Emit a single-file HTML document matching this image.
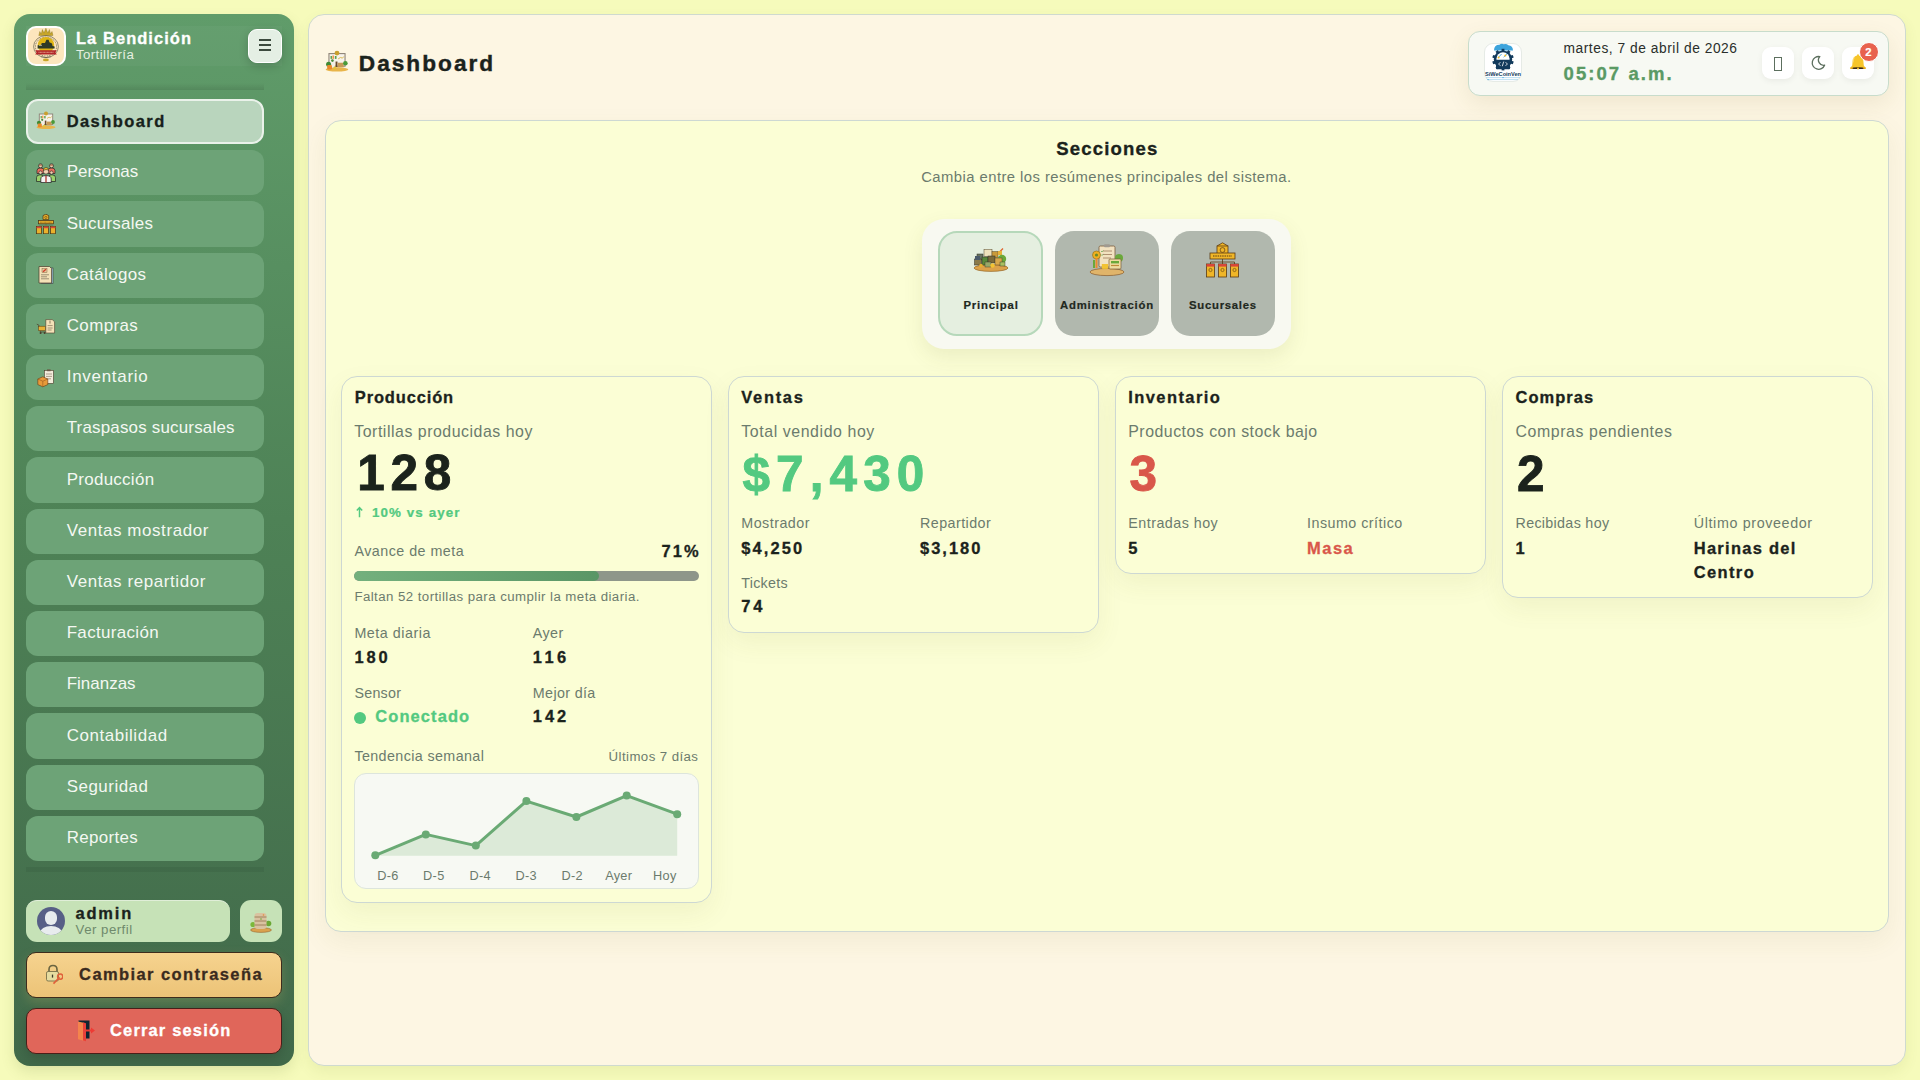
<!DOCTYPE html>
<html><head><meta charset="utf-8"><title>Dashboard</title>
<style>
*{box-sizing:border-box;margin:0;padding:0}
html,body{width:1920px;height:1080px;overflow:hidden}
body{background:#f6fbbb;font-family:"Liberation Sans",sans-serif;position:relative}
.t{position:absolute;white-space:nowrap}
.a{position:absolute}

.sb{left:14px;top:14px;width:280px;height:1052px;border-radius:16px;background:linear-gradient(180deg,#609c6a 0%,#4e8256 48%,#41694a 100%);box-shadow:0 6px 14px rgba(70,90,20,.13)}
.nav{position:absolute;left:26px;width:238px;height:45.2px;border-radius:12px;background:#6da377}
.nav.act{background:#b9d5bd;border:2px solid #eaf2ea}
.main{left:308px;top:14px;width:1598px;height:1052px;border-radius:16px;background:#fdf6e3;border:1px solid #cfdacf;box-shadow:0 6px 14px rgba(90,100,20,.08)}
.card{position:absolute;background:#fbfed5;border:1px solid #cdd8d3;border-radius:16px;box-shadow:0 10px 26px rgba(120,110,40,.08)}

</style></head><body>
<div class="a sb"></div>
<div class="a" style="left:26px;top:26px;width:256px;height:40px;background:rgba(255,255,255,.035)"></div>
<div class="a" style="left:26px;top:26px;width:40px;height:40px;border-radius:10px;background:#fde6bd;border:2px solid #fff"></div>
<div class="t" style="left:76.00px;top:27.59px;font-size:16.48px;line-height:21px;font-weight:700;color:#ffffff;letter-spacing:1.057px;-webkit-text-stroke:0.30px currentColor;">La Bendición</div>
<div class="t" style="left:76.00px;top:45.91px;font-size:13.25px;line-height:17px;font-weight:400;color:#e6f0e2;letter-spacing:0.400px;">Tortillería</div>
<div class="a" style="left:248px;top:29px;width:34px;height:34px;border-radius:9px;background:#e4efe4;border:1.5px solid #fff;box-shadow:0 3px 10px rgba(0,0,0,.18)"></div>
<div class="a" style="left:259px;top:39px;width:12px;height:2px;background:#3c4a3e"></div>
<div class="a" style="left:259px;top:44px;width:12px;height:2px;background:#3c4a3e"></div>
<div class="a" style="left:259px;top:49px;width:12px;height:2px;background:#3c4a3e"></div>
<div class="a" style="left:26px;top:83px;width:238px;height:7px;background:linear-gradient(180deg,rgba(0,0,0,0),rgba(0,0,0,.10))"></div>
<div class="a" style="left:26px;top:866.5px;width:238px;height:5px;background:rgba(0,0,0,.06)"></div>
<div class="nav act" style="top:99.0px"></div>
<div class="t" style="left:66.70px;top:110.89px;font-size:16.48px;line-height:21px;font-weight:700;color:#17211a;letter-spacing:1.438px;-webkit-text-stroke:0.30px currentColor;">Dashboard</div>
<div class="nav" style="top:150.2px"></div>
<div class="t" style="left:66.70px;top:161.32px;font-size:16.96px;line-height:22px;font-weight:400;color:#f4f8f2;letter-spacing:0.000px;">Personas</div>
<div class="nav" style="top:201.4px"></div>
<div class="t" style="left:66.70px;top:212.52px;font-size:16.96px;line-height:22px;font-weight:400;color:#f4f8f2;letter-spacing:0.278px;">Sucursales</div>
<div class="nav" style="top:252.6px"></div>
<div class="t" style="left:66.70px;top:263.72px;font-size:16.96px;line-height:22px;font-weight:400;color:#f4f8f2;letter-spacing:0.391px;">Catálogos</div>
<div class="nav" style="top:303.8px"></div>
<div class="t" style="left:66.70px;top:314.92px;font-size:16.96px;line-height:22px;font-weight:400;color:#f4f8f2;letter-spacing:0.396px;">Compras</div>
<div class="nav" style="top:355.0px"></div>
<div class="t" style="left:66.70px;top:366.12px;font-size:16.96px;line-height:22px;font-weight:400;color:#f4f8f2;letter-spacing:0.736px;">Inventario</div>
<div class="nav" style="top:406.2px"></div>
<div class="t" style="left:66.70px;top:417.32px;font-size:16.96px;line-height:22px;font-weight:400;color:#f4f8f2;letter-spacing:0.197px;">Traspasos sucursales</div>
<div class="nav" style="top:457.4px"></div>
<div class="t" style="left:66.70px;top:468.52px;font-size:16.96px;line-height:22px;font-weight:400;color:#f4f8f2;letter-spacing:0.292px;">Producción</div>
<div class="nav" style="top:508.6px"></div>
<div class="t" style="left:66.70px;top:519.72px;font-size:16.96px;line-height:22px;font-weight:400;color:#f4f8f2;letter-spacing:0.592px;">Ventas mostrador</div>
<div class="nav" style="top:559.8px"></div>
<div class="t" style="left:66.70px;top:570.92px;font-size:16.96px;line-height:22px;font-weight:400;color:#f4f8f2;letter-spacing:0.602px;">Ventas repartidor</div>
<div class="nav" style="top:611.0px"></div>
<div class="t" style="left:66.70px;top:622.12px;font-size:16.96px;line-height:22px;font-weight:400;color:#f4f8f2;letter-spacing:0.338px;">Facturación</div>
<div class="nav" style="top:662.2px"></div>
<div class="t" style="left:66.70px;top:673.32px;font-size:16.96px;line-height:22px;font-weight:400;color:#f4f8f2;letter-spacing:0.018px;">Finanzas</div>
<div class="nav" style="top:713.4px"></div>
<div class="t" style="left:66.70px;top:724.52px;font-size:16.96px;line-height:22px;font-weight:400;color:#f4f8f2;letter-spacing:0.568px;">Contabilidad</div>
<div class="nav" style="top:764.6px"></div>
<div class="t" style="left:66.70px;top:775.72px;font-size:16.96px;line-height:22px;font-weight:400;color:#f4f8f2;letter-spacing:0.500px;">Seguridad</div>
<div class="nav" style="top:815.8px"></div>
<div class="t" style="left:66.70px;top:826.92px;font-size:16.96px;line-height:22px;font-weight:400;color:#f4f8f2;letter-spacing:0.321px;">Reportes</div>
<div class="a" style="left:26px;top:900px;width:204px;height:42px;border-radius:11px;background:#c6e2b7;border-top:1px solid #e0eed8"></div>
<div class="a" style="left:37px;top:907px;width:28px;height:28px;border-radius:50%;background:#575f86;overflow:hidden"><div style="position:absolute;left:8px;top:4px;width:12px;height:14px;border-radius:6px;background:#e8ecee"></div><div style="position:absolute;left:3px;top:19px;width:22px;height:14px;border-radius:50%;background:#e8ecee"></div></div>
<div class="t" style="left:75.60px;top:902.69px;font-size:16.48px;line-height:21px;font-weight:700;color:#1b231c;letter-spacing:1.781px;-webkit-text-stroke:0.30px currentColor;">admin</div>
<div class="t" style="left:75.60px;top:920.61px;font-size:13.25px;line-height:17px;font-weight:400;color:#6f8a6c;letter-spacing:0.472px;">Ver perfil</div>
<div class="a" style="left:240px;top:900px;width:42px;height:42px;border-radius:11px;background:#c6e2b7"></div>
<div class="a" style="left:26px;top:952px;width:256px;height:46px;border-radius:10px;background:linear-gradient(180deg,#f6d38f,#ecc377);border:1px solid #3e2c1c;box-shadow:0 5px 12px rgba(210,180,100,.22)"></div>
<div class="t" style="left:79.10px;top:964.19px;font-size:16.48px;line-height:21px;font-weight:700;color:#3a2a1e;letter-spacing:1.419px;-webkit-text-stroke:0.30px currentColor;">Cambiar contraseña</div>
<div class="a" style="left:26px;top:1008px;width:256px;height:46px;border-radius:10px;background:#e0665a;border:1px solid #4a1e18;box-shadow:0 5px 12px rgba(0,0,0,.15)"></div>
<div class="t" style="left:110.00px;top:1019.79px;font-size:16.48px;line-height:21px;font-weight:700;color:#ffffff;letter-spacing:1.167px;-webkit-text-stroke:0.30px currentColor;">Cerrar sesión</div>
<div class="a main"></div>
<div class="t" style="left:358.80px;top:48.55px;font-size:22.66px;line-height:29px;font-weight:700;color:#1b231c;letter-spacing:2.000px;-webkit-text-stroke:0.41px currentColor;">Dashboard</div>
<div class="a" style="left:1468px;top:31px;width:421px;height:65px;border-radius:12px;background:#f7f9f3;border:1px solid #c8dccb;box-shadow:0 8px 22px rgba(120,100,40,.10)"></div>
<div class="a" style="left:1484px;top:43px;width:38px;height:39px;border-radius:9px;background:#fff;border:1px solid #e6ebe6"></div>
<div class="t" style="left:1563.50px;top:40.18px;font-size:13.78px;line-height:18px;font-weight:400;color:#2a2f2b;letter-spacing:0.540px;">martes, 7 de abril de 2026</div>
<div class="t" style="left:1563.50px;top:61.78px;font-size:18.54px;line-height:24px;font-weight:700;color:#5a9a64;letter-spacing:2.069px;-webkit-text-stroke:0.33px currentColor;">05:07 a.m.</div>
<div class="a" style="left:1762px;top:47px;width:32px;height:32px;border-radius:9px;background:#fff;box-shadow:0 2px 6px rgba(0,0,0,.06)"></div>
<div class="a" style="left:1802px;top:47px;width:32px;height:32px;border-radius:9px;background:#fff;box-shadow:0 2px 6px rgba(0,0,0,.06)"></div>
<div class="a" style="left:1842px;top:47px;width:32px;height:32px;border-radius:9px;background:#fff;box-shadow:0 2px 6px rgba(0,0,0,.06)"></div>
<div class="a" style="left:1860px;top:43px;width:18px;height:18px;border-radius:50%;background:#e8624e;border:1.5px solid #fff"></div>
<div class="card" style="left:325px;top:120px;width:1564px;height:812px"></div>
<div class="t" style="left:1056.33px;top:137.28px;font-size:18.54px;line-height:24px;font-weight:700;color:#1b231c;letter-spacing:1.156px;-webkit-text-stroke:0.33px currentColor;">Secciones</div>
<div class="t" style="left:921.20px;top:168.46px;font-size:14.84px;line-height:19px;font-weight:400;color:#6b7b6d;letter-spacing:0.443px;">Cambia entre los resúmenes principales del sistema.</div>
<div class="a" style="left:922px;top:219px;width:369px;height:130px;border-radius:22px;background:#f8f9f1;box-shadow:0 8px 20px rgba(100,100,40,.10)"></div>
<div class="a" style="left:938px;top:231px;width:105px;height:105px;border-radius:19px;background:#e5efe0;border:2px solid #b6d8ba"></div>
<div class="a" style="left:1055px;top:231px;width:104px;height:105px;border-radius:19px;background:#b1b8ae"></div>
<div class="a" style="left:1171px;top:231px;width:104px;height:105px;border-radius:19px;background:#b1b8ae"></div>
<div class="t" style="left:963.45px;top:297.67px;font-size:11.33px;line-height:15px;font-weight:700;color:#1f2820;letter-spacing:0.812px;-webkit-text-stroke:0.20px currentColor;">Principal</div>
<div class="t" style="left:1059.89px;top:297.67px;font-size:11.33px;line-height:15px;font-weight:700;color:#1f2820;letter-spacing:0.837px;-webkit-text-stroke:0.20px currentColor;">Administración</div>
<div class="t" style="left:1189.08px;top:297.67px;font-size:11.33px;line-height:15px;font-weight:700;color:#1f2820;letter-spacing:0.722px;-webkit-text-stroke:0.20px currentColor;">Sucursales</div>
<div class="card" style="left:341px;top:376px;width:371px;height:527px"></div>
<div class="card" style="left:728px;top:376px;width:371px;height:257px"></div>
<div class="card" style="left:1115px;top:376px;width:371px;height:198px"></div>
<div class="card" style="left:1502px;top:376px;width:371px;height:222px"></div>
<div class="t" style="left:354.80px;top:386.79px;font-size:16.48px;line-height:21px;font-weight:700;color:#1b231c;letter-spacing:0.861px;-webkit-text-stroke:0.30px currentColor;">Producción</div>
<div class="t" style="left:354.30px;top:421.19px;font-size:15.9px;line-height:21px;font-weight:400;color:#6b7b6d;letter-spacing:0.522px;">Tortillas producidas hoy</div>
<div class="t" style="left:357.30px;top:441.47px;font-size:49.44px;line-height:64px;font-weight:700;color:#1b231c;letter-spacing:5.688px;-webkit-text-stroke:0.89px currentColor;">128</div>
<div class="t" style="left:371.90px;top:504.06px;font-size:13.39px;line-height:17px;font-weight:700;color:#53c980;letter-spacing:1.108px;-webkit-text-stroke:0.24px currentColor;">10% vs ayer</div>
<svg class="a" style="left:356px;top:506px" width="7" height="12" viewBox="0 0 7 12"><path d="M3.5 11.2V1.6M.8 4.4l2.7-2.8 2.7 2.8" stroke="#53c980" stroke-width="1.5" fill="none"/></svg>
<div class="t" style="left:354.40px;top:542.34px;font-size:14.31px;line-height:19px;font-weight:400;color:#6b7b6d;letter-spacing:0.481px;">Avance de meta</div>
<div class="t" style="left:661.60px;top:540.59px;font-size:16.48px;line-height:21px;font-weight:700;color:#1b231c;letter-spacing:2.000px;-webkit-text-stroke:0.30px currentColor;">71%</div>
<div class="a" style="left:354px;top:571px;width:345px;height:10px;border-radius:5px;background:#8e968a;overflow:hidden"><div style="width:245px;height:10px;border-radius:5px;background:linear-gradient(90deg,#73b07d,#5a9666)"></div></div>
<div class="t" style="left:354.40px;top:587.71px;font-size:13.25px;line-height:17px;font-weight:400;color:#6b7b6d;letter-spacing:0.439px;">Faltan 52 tortillas para cumplir la meta diaria.</div>
<div class="t" style="left:354.40px;top:623.54px;font-size:14.31px;line-height:19px;font-weight:400;color:#6b7b6d;letter-spacing:0.537px;">Meta diaria</div>
<div class="t" style="left:354.40px;top:647.29px;font-size:16.48px;line-height:21px;font-weight:700;color:#1b231c;letter-spacing:2.938px;-webkit-text-stroke:0.30px currentColor;">180</div>
<div class="t" style="left:532.80px;top:623.54px;font-size:14.31px;line-height:19px;font-weight:400;color:#6b7b6d;letter-spacing:0.417px;">Ayer</div>
<div class="t" style="left:532.80px;top:647.29px;font-size:16.48px;line-height:21px;font-weight:700;color:#1b231c;letter-spacing:3.375px;-webkit-text-stroke:0.30px currentColor;">116</div>
<div class="t" style="left:354.40px;top:684.04px;font-size:14.31px;line-height:19px;font-weight:400;color:#6b7b6d;letter-spacing:0.250px;">Sensor</div>
<div class="a" style="left:354px;top:712px;width:12px;height:12px;border-radius:50%;background:#53c980"></div>
<div class="t" style="left:375.30px;top:706.49px;font-size:16.48px;line-height:21px;font-weight:700;color:#53c980;letter-spacing:1.094px;-webkit-text-stroke:0.30px currentColor;">Conectado</div>
<div class="t" style="left:532.80px;top:684.04px;font-size:14.31px;line-height:19px;font-weight:400;color:#6b7b6d;letter-spacing:0.359px;">Mejor día</div>
<div class="t" style="left:532.80px;top:706.49px;font-size:16.48px;line-height:21px;font-weight:700;color:#1b231c;letter-spacing:2.938px;-webkit-text-stroke:0.30px currentColor;">142</div>
<div class="t" style="left:354.40px;top:746.54px;font-size:14.31px;line-height:19px;font-weight:400;color:#6b7b6d;letter-spacing:0.391px;">Tendencia semanal</div>
<div class="t" style="left:608.60px;top:747.91px;font-size:13.25px;line-height:17px;font-weight:400;color:#6b7b6d;letter-spacing:0.415px;">Últimos 7 días</div>
<div class="a" style="left:354px;top:773px;width:345px;height:116px;border-radius:12px;background:#f7f9f3;border:1px solid #dde5dc"></div>
<svg class="a" style="left:354px;top:773px" width="345" height="116"><polygon points="21.3,82.8 21.3,82.3 71.8,61.4 121.8,72.6 172.4,28.1 222.4,44.0 272.7,22.6 323.2,41.2 323.2,82.8" fill="#dcead8"/><polyline points="21.3,82.3 71.8,61.4 121.8,72.6 172.4,28.1 222.4,44.0 272.7,22.6 323.2,41.2" fill="none" stroke="#6aaa74" stroke-width="3" stroke-linejoin="round"/><circle cx="21.3" cy="82.3" r="4" fill="#6aaa74"/><circle cx="71.8" cy="61.4" r="4" fill="#6aaa74"/><circle cx="121.8" cy="72.6" r="4" fill="#6aaa74"/><circle cx="172.4" cy="28.1" r="4" fill="#6aaa74"/><circle cx="222.4" cy="44.0" r="4" fill="#6aaa74"/><circle cx="272.7" cy="22.6" r="4" fill="#6aaa74"/><circle cx="323.2" cy="41.2" r="4" fill="#6aaa74"/></svg>
<div class="t" style="left:377.18px;top:867.29px;font-size:12.72px;line-height:17px;font-weight:400;color:#6b7b6d;letter-spacing:0.375px;">D-6</div>
<div class="t" style="left:422.98px;top:867.29px;font-size:12.72px;line-height:17px;font-weight:400;color:#6b7b6d;letter-spacing:0.375px;">D-5</div>
<div class="t" style="left:469.38px;top:867.29px;font-size:12.72px;line-height:17px;font-weight:400;color:#6b7b6d;letter-spacing:0.375px;">D-4</div>
<div class="t" style="left:515.38px;top:867.29px;font-size:12.72px;line-height:17px;font-weight:400;color:#6b7b6d;letter-spacing:0.375px;">D-3</div>
<div class="t" style="left:561.38px;top:867.29px;font-size:12.72px;line-height:17px;font-weight:400;color:#6b7b6d;letter-spacing:0.375px;">D-2</div>
<div class="t" style="left:605.16px;top:867.29px;font-size:12.72px;line-height:17px;font-weight:400;color:#6b7b6d;letter-spacing:0.292px;">Ayer</div>
<div class="t" style="left:652.95px;top:867.29px;font-size:12.72px;line-height:17px;font-weight:400;color:#6b7b6d;letter-spacing:0.438px;">Hoy</div>
<div class="t" style="left:741.25px;top:386.99px;font-size:16.48px;line-height:21px;font-weight:700;color:#1b231c;letter-spacing:1.700px;-webkit-text-stroke:0.30px currentColor;">Ventas</div>
<div class="t" style="left:741.25px;top:421.19px;font-size:15.9px;line-height:21px;font-weight:400;color:#6b7b6d;letter-spacing:0.586px;">Total vendido hoy</div>
<div class="t" style="left:742.50px;top:441.57px;font-size:49.44px;line-height:64px;font-weight:700;color:#53c980;letter-spacing:6.125px;-webkit-text-stroke:0.89px currentColor;">$7,430</div>
<div class="t" style="left:741.25px;top:513.74px;font-size:14.31px;line-height:19px;font-weight:400;color:#6b7b6d;letter-spacing:0.484px;">Mostrador</div>
<div class="t" style="left:741.25px;top:537.74px;font-size:16.48px;line-height:21px;font-weight:700;color:#1b231c;letter-spacing:2.100px;-webkit-text-stroke:0.30px currentColor;">$4,250</div>
<div class="t" style="left:920.00px;top:513.74px;font-size:14.31px;line-height:19px;font-weight:400;color:#6b7b6d;letter-spacing:0.444px;">Repartidor</div>
<div class="t" style="left:920.00px;top:537.74px;font-size:16.48px;line-height:21px;font-weight:700;color:#1b231c;letter-spacing:2.000px;-webkit-text-stroke:0.30px currentColor;">$3,180</div>
<div class="t" style="left:741.25px;top:573.74px;font-size:14.31px;line-height:19px;font-weight:400;color:#6b7b6d;letter-spacing:0.271px;">Tickets</div>
<div class="t" style="left:741.25px;top:596.49px;font-size:16.48px;line-height:21px;font-weight:700;color:#1b231c;letter-spacing:2.875px;-webkit-text-stroke:0.30px currentColor;">74</div>
<div class="t" style="left:1128.25px;top:386.99px;font-size:16.48px;line-height:21px;font-weight:700;color:#1b231c;letter-spacing:1.431px;-webkit-text-stroke:0.30px currentColor;">Inventario</div>
<div class="t" style="left:1128.25px;top:421.19px;font-size:15.9px;line-height:21px;font-weight:400;color:#6b7b6d;letter-spacing:0.495px;">Productos con stock bajo</div>
<div class="t" style="left:1129.50px;top:441.57px;font-size:49.44px;line-height:64px;font-weight:700;color:#d9574a;letter-spacing:0.000px;-webkit-text-stroke:0.89px currentColor;">3</div>
<div class="t" style="left:1128.25px;top:513.74px;font-size:14.31px;line-height:19px;font-weight:400;color:#6b7b6d;letter-spacing:0.477px;">Entradas hoy</div>
<div class="t" style="left:1128.25px;top:537.74px;font-size:16.48px;line-height:21px;font-weight:700;color:#1b231c;letter-spacing:0.000px;-webkit-text-stroke:0.30px currentColor;">5</div>
<div class="t" style="left:1307.00px;top:513.74px;font-size:14.31px;line-height:19px;font-weight:400;color:#6b7b6d;letter-spacing:0.481px;">Insumo crítico</div>
<div class="t" style="left:1307.00px;top:537.74px;font-size:16.48px;line-height:21px;font-weight:700;color:#d9574a;letter-spacing:1.500px;-webkit-text-stroke:0.30px currentColor;">Masa</div>
<div class="t" style="left:1515.50px;top:386.99px;font-size:16.48px;line-height:21px;font-weight:700;color:#1b231c;letter-spacing:1.042px;-webkit-text-stroke:0.30px currentColor;">Compras</div>
<div class="t" style="left:1515.50px;top:421.19px;font-size:15.9px;line-height:21px;font-weight:400;color:#6b7b6d;letter-spacing:0.574px;">Compras pendientes</div>
<div class="t" style="left:1517.00px;top:441.57px;font-size:49.44px;line-height:64px;font-weight:700;color:#1b231c;letter-spacing:0.000px;-webkit-text-stroke:0.89px currentColor;">2</div>
<div class="t" style="left:1515.50px;top:513.74px;font-size:14.31px;line-height:19px;font-weight:400;color:#6b7b6d;letter-spacing:0.312px;">Recibidas hoy</div>
<div class="t" style="left:1515.50px;top:537.74px;font-size:16.48px;line-height:21px;font-weight:700;color:#1b231c;letter-spacing:0.000px;-webkit-text-stroke:0.30px currentColor;">1</div>
<div class="t" style="left:1693.75px;top:513.74px;font-size:14.31px;line-height:19px;font-weight:400;color:#6b7b6d;letter-spacing:0.633px;">Último proveedor</div>
<div class="t" style="left:1693.75px;top:537.74px;font-size:16.48px;line-height:21px;font-weight:700;color:#1b231c;letter-spacing:1.275px;-webkit-text-stroke:0.30px currentColor;">Harinas del</div>
<div class="t" style="left:1693.75px;top:561.99px;font-size:16.48px;line-height:21px;font-weight:700;color:#1b231c;letter-spacing:1.375px;-webkit-text-stroke:0.30px currentColor;">Centro</div>
<svg class="a" style="left:36px;top:111px" width="20" height="20" viewBox="0 0 20 20"><ellipse cx="10" cy="16.2" rx="9.5" ry="1.8" fill="#e9b54a"/>
<rect x="3.3" y="3" width="13.4" height="10.5" fill="#f7f3ea" stroke="#8c8275" stroke-width="0.9"/>
<circle cx="10" cy="2.6" r="2" fill="#c9a02e"/>
<rect x="4.6" y="5" width="1.2" height="2.4" fill="#5aa04a"/><rect x="6.2" y="4.6" width="1.2" height="2.8" fill="#ee8a3a"/>
<rect x="8.2" y="5" width="1.4" height="2.4" fill="#5aa04a"/><path d="M11 7.4l2-1.2 1.5.6 1.2-1.4" stroke="#d8b64a" stroke-width="0.8" fill="none"/>
<rect x="4.6" y="8.4" width="3.6" height="6" fill="#f3efe6"/><circle cx="6.2" cy="8.8" r="1.1" fill="#4d8c3a"/>
<rect x="8.8" y="9.6" width="1.6" height="4.6" fill="#6a4a2a"/><rect x="10.6" y="10.6" width="5" height="3.8" fill="#c79a55"/>
<circle cx="3" cy="11.8" r="2.1" fill="#3f8a34"/><circle cx="17" cy="11" r="1.9" fill="#4a9a38"/>
<rect x="1.8" y="12.6" width="4" height="3.6" rx="0.8" fill="#e98a2c"/><circle cx="8.2" cy="15" r="1.2" fill="#e2c23a"/></svg>
<svg class="a" style="left:36px;top:163px" width="20" height="20" viewBox="0 0 20 20"><path d="M1 10.5v-3q0-2.6 3.5-2.6t3.5 2.6v3z" fill="#ee6f5e" stroke="#222" stroke-width=".7"/>
<path d="M12 10.5v-3q0-2.6 3.5-2.6t3.5 2.6v3z" fill="#ee6f5e" stroke="#222" stroke-width=".7"/>
<circle cx="4.5" cy="2.8" r="2" fill="#f1cfb0" stroke="#222" stroke-width=".7"/><path d="M2.5 2.6q2-2.4 4 0" fill="#8a4a22"/>
<circle cx="15.5" cy="2.8" r="2" fill="#f1cfb0" stroke="#222" stroke-width=".7"/><path d="M13.5 2.6q2-2.4 4 0" fill="#8a4a22"/>
<path d="M0.5 18.5v-4q0-2.6 3.2-2.6h2.6v6.6z" fill="#9ad26a" stroke="#222" stroke-width=".7"/>
<path d="M19.5 18.5v-4q0-2.6-3.2-2.6h-2.6v6.6z" fill="#9ad26a" stroke="#222" stroke-width=".7"/>
<circle cx="4.5" cy="9.6" r="1.7" fill="#f1cfb0" stroke="#222" stroke-width=".6"/><circle cx="15.5" cy="9.6" r="1.7" fill="#f1cfb0" stroke="#222" stroke-width=".6"/>
<path d="M4.8 19.6v-3.6q0-3.4 5.2-3.4t5.2 3.4v3.6z" fill="#f4f4f4" stroke="#222" stroke-width=".8"/><path d="M10 12.8v6.6" stroke="#b0342a" stroke-width="1.3"/>
<circle cx="10" cy="8.4" r="2.7" fill="#f3d2b4" stroke="#222" stroke-width=".6"/><path d="M7.1 8q.2-3.6 2.9-3.6t2.9 3.6q-1.4-1.6-2.9-1.4t-2.9 1.4z" fill="#f2c232" stroke="#222" stroke-width=".5"/></svg>
<svg class="a" style="left:36px;top:214px" width="20" height="20" viewBox="0 0 20 20"><path d="M7 1.6l2.85-1.4 2.85 1.4v4h-5.7z" fill="#eab12c" stroke="#4a2e10" stroke-width=".7"/><circle cx="9.85" cy="3.4" r="1.1" fill="none" stroke="#4a2e10" stroke-width=".5"/>
<rect x="2.5" y="6.6" width="15" height="3.2" fill="#eab12c" stroke="#4a2e10" stroke-width=".7"/><path d="M4 8.2h12" stroke="#4a2e10" stroke-width=".5" stroke-dasharray=".8 .5"/>
<path d="M10 9.8v1.4M2.9 11.2h14.2" stroke="#5a5a3a" stroke-width=".5"/>
<rect x="0.6" y="12.6" width="4.8" height="7.2" fill="#eab12c" stroke="#4a2e10" stroke-width=".7"/><rect x="0.6" y="12.6" width="4.8" height="1.6" fill="#d8463a"/>
<rect x="7.6" y="12.6" width="4.8" height="7.2" fill="#eab12c" stroke="#4a2e10" stroke-width=".7"/><rect x="7.6" y="12.6" width="4.8" height="1.6" fill="#d8463a"/>
<rect x="14.6" y="12.6" width="4.8" height="7.2" fill="#eab12c" stroke="#4a2e10" stroke-width=".7"/><rect x="14.6" y="12.6" width="4.8" height="1.6" fill="#d8463a"/></svg>
<svg class="a" style="left:36px;top:265px" width="20" height="20" viewBox="0 0 20 20"><rect x="5" y="3" width="12" height="15.5" fill="#9ec6dc" stroke="#3a3a3a" stroke-width=".6"/>
<path d="M3 1.5h10.5l2 2v14.5h-12.5z" fill="#f4e2b8" stroke="#4a3a2a" stroke-width=".7"/>
<rect x="6" y="3.5" width="5" height="4" fill="#e7c99a" stroke="#6a4a2a" stroke-width=".4"/><path d="M7 6.8l3-2.6" stroke="#d23a2a" stroke-width="1.4"/>
<path d="M5 9.8h8M5 11.8h6M5 13.8h8" stroke="#7a6a55" stroke-width=".7"/></svg>
<svg class="a" style="left:36px;top:317px" width="20" height="20" viewBox="0 0 20 20"><path d="M0.8 7.2l2 .8 1.6 7h6" stroke="#4a3a2a" stroke-width=".7" fill="none"/><rect x="2.6" y="9.2" width="7" height="4.4" fill="#e6b236" stroke="#5a3a12" stroke-width=".5"/>
<circle cx="4.6" cy="16" r="1" fill="#4a3a2a"/><circle cx="8.6" cy="16" r="1" fill="#4a3a2a"/>
<path d="M9.8 2.6h6.4l2.4 2.2v11.2h-8.8z" fill="#f4e2b8" stroke="#4a3a2a" stroke-width=".6"/><path d="M11.6 8.6h5M11.6 11h5M11.6 13h4" stroke="#6a5a45" stroke-width=".6"/><path d="M14 3.6v3" stroke="#4a3a2a" stroke-width=".6"/></svg>
<svg class="a" style="left:36px;top:368px" width="20" height="20" viewBox="0 0 20 20"><rect x="8.4" y="2.4" width="9" height="13" fill="#f4ecdc" stroke="#4a3a2a" stroke-width=".6"/><rect x="11" y="1.4" width="3.6" height="1.8" fill="#6a5a45"/>
<path d="M10 6h6M10 8.4h6M10 10.8h5" stroke="#7a6a55" stroke-width=".6"/>
<path d="M1.8 11l5-2.2 5 2.2v5.6l-5 2.2-5-2.2z" fill="#e79a3a" stroke="#6a3a12" stroke-width=".6"/><path d="M1.8 11l5 2.2 5-2.2M6.8 13.2v5.6" stroke="#8a4a1a" stroke-width=".5" fill="none"/></svg>
<svg class="a" style="left:325px;top:50px" width="24" height="24" viewBox="0 0 20 20"><ellipse cx="10" cy="16.2" rx="9.5" ry="1.8" fill="#e9b54a"/>
<rect x="3.3" y="3" width="13.4" height="10.5" fill="#f7f3ea" stroke="#8c8275" stroke-width="0.9"/>
<circle cx="10" cy="2.6" r="2" fill="#c9a02e"/>
<rect x="4.6" y="5" width="1.2" height="2.4" fill="#5aa04a"/><rect x="6.2" y="4.6" width="1.2" height="2.8" fill="#ee8a3a"/>
<rect x="8.2" y="5" width="1.4" height="2.4" fill="#5aa04a"/><path d="M11 7.4l2-1.2 1.5.6 1.2-1.4" stroke="#d8b64a" stroke-width="0.8" fill="none"/>
<rect x="4.6" y="8.4" width="3.6" height="6" fill="#f3efe6"/><circle cx="6.2" cy="8.8" r="1.1" fill="#4d8c3a"/>
<rect x="8.8" y="9.6" width="1.6" height="4.6" fill="#6a4a2a"/><rect x="10.6" y="10.6" width="5" height="3.8" fill="#c79a55"/>
<circle cx="3" cy="11.8" r="2.1" fill="#3f8a34"/><circle cx="17" cy="11" r="1.9" fill="#4a9a38"/>
<rect x="1.8" y="12.6" width="4" height="3.6" rx="0.8" fill="#e98a2c"/><circle cx="8.2" cy="15" r="1.2" fill="#e2c23a"/></svg>
<svg class="a" style="left:28px;top:28px" width="36" height="36" viewBox="0 0 36 36"><path d="M10.8 7.5l1-4 1.4 2.6 1.2-4.6 1.6 3.6 1.9-4.9 1.9 4.9 1.6-3.6 1.2 4.6 1.4-2.6 1 4 z" fill="#c9a628" stroke="#7a6a1a" stroke-width=".35"/>
<ellipse cx="18" cy="18.6" rx="12.4" ry="11" fill="none" stroke="#3e3e30" stroke-width=".55"/><ellipse cx="18" cy="18.6" rx="10.6" ry="9.4" fill="none" stroke="#5a5a48" stroke-width=".9" stroke-dasharray=".8 .9"/>
<circle cx="18" cy="17.1" r="8.2" fill="#dfb514"/>
<path d="M9.6 20.5v-3.2h3.2l1-2.2h3.2l1.4-3.4h2.2l.8 2.6 2.6 1.2.6 2.4 2 .6v2z" fill="#2d3a26"/><path d="M11 17.3h3" stroke="#cfcfbf" stroke-width=".8"/>
<path d="M7.2 22.3h21.6l-1.4 2 1.4 2.1H7.2l1.4-2.1z" fill="#b4262a"/><path d="M10.5 24.3h15" stroke="#f4d7b0" stroke-width=".7" stroke-dasharray="1 .4"/>
<path d="M13 28.6q5 2 10 0" stroke="#4a4a3a" stroke-width=".5" fill="none"/><ellipse cx="17.9" cy="31.9" rx="3" ry="1.3" fill="#c9a628"/></svg>
<svg class="a" style="left:249px;top:911px" width="24" height="22" viewBox="0 0 24 22"><ellipse cx="12" cy="19" rx="10.5" ry="2.4" fill="#d9a24e" stroke="#8a5a2a" stroke-width=".5"/>
<circle cx="4" cy="13.5" r="2.6" fill="#7bb83a"/><circle cx="19.5" cy="12.5" r="2.8" fill="#6aa834"/>
<rect x="5.5" y="2" width="12" height="16" rx="3" fill="#d9c2a0"/>
<path d="M5.5 6h12M5.5 10h12M5.5 14h12" stroke="#9a7a55" stroke-width=".9"/><circle cx="14.5" cy="4" r=".8" fill="#e48a3a"/><circle cx="12" cy="8" r=".8" fill="#6aa834"/></svg>
<svg class="a" style="left:45px;top:964px" width="18" height="22" viewBox="0 0 18 22"><path d="M4 8V5.5q0-4 4-4t4 4V8" fill="none" stroke="#6a6440" stroke-width="1.6"/>
<rect x="1.5" y="7.5" width="12" height="9.5" rx="1.6" fill="#e6dca0" stroke="#6a6440" stroke-width=".8"/><path d="M7.5 10.6v3" stroke="#3a3a2a" stroke-width="1.3"/>
<path d="M8.5 19.6l6-6.4" stroke="#e0603a" stroke-width="1.6"/><circle cx="15.2" cy="12.6" r="2.6" fill="none" stroke="#e0603a" stroke-width="1.5"/></svg>
<svg class="a" style="left:77px;top:1020px" width="20" height="22" viewBox="0 0 20 22"><rect x="1.5" y="0.5" width="11" height="18" fill="#0f2530"/><path d="M1 1.5l7 1.5v18l-7-1.8z" fill="#f4844c"/><path d="M6 2.5l3 .7v18l-3-.6z" fill="#e8413a"/>
<path d="M9 10.5h6" stroke="#ee3b34" stroke-width="2"/><path d="M14 7.6l4 2.9-4 2.9z" fill="#ee3b34"/></svg>
<svg class="a" style="left:1484px;top:43px" width="38" height="39" viewBox="0 0 38 39"><path d="M10 7.4q0-5.6 5.4-5.6 2-1.6 4.4-.6 2.6-.8 4.6 1 4.4.4 4.6 5.2z" fill="#3da4dc"/>
<rect x="17.6" y="5.8" width="2.8" height="2.6" fill="#123a5c" transform="rotate(0 19 16.6)"/><rect x="17.6" y="5.8" width="2.8" height="2.6" fill="#123a5c" transform="rotate(36 19 16.6)"/><rect x="17.6" y="5.8" width="2.8" height="2.6" fill="#123a5c" transform="rotate(72 19 16.6)"/><rect x="17.6" y="5.8" width="2.8" height="2.6" fill="#123a5c" transform="rotate(108 19 16.6)"/><rect x="17.6" y="5.8" width="2.8" height="2.6" fill="#123a5c" transform="rotate(144 19 16.6)"/><rect x="17.6" y="5.8" width="2.8" height="2.6" fill="#123a5c" transform="rotate(180 19 16.6)"/><rect x="17.6" y="5.8" width="2.8" height="2.6" fill="#123a5c" transform="rotate(216 19 16.6)"/><rect x="17.6" y="5.8" width="2.8" height="2.6" fill="#123a5c" transform="rotate(252 19 16.6)"/><rect x="17.6" y="5.8" width="2.8" height="2.6" fill="#123a5c" transform="rotate(288 19 16.6)"/><rect x="17.6" y="5.8" width="2.8" height="2.6" fill="#123a5c" transform="rotate(324 19 16.6)"/><circle cx="19" cy="16.6" r="9.2" fill="#123a5c"/><circle cx="19" cy="15.8" r="6.6" fill="#fff"/>
<path d="M14.6 14.2l3-3.2M19.6 14.2l3.4-3.4" stroke="#3da4dc" stroke-width=".9"/><circle cx="14.6" cy="14.4" r="1" fill="#f2b81e"/><circle cx="21.4" cy="12.4" r="1" fill="#f2b81e"/>
<rect x="12" y="16.8" width="14" height="9.4" rx=".8" fill="#123a5c"/><path d="M16.4 19.2l-1.8 1.8 1.8 1.8M21.6 19.2l1.8 1.8-1.8 1.8M19.7 18.6l-1.4 4.6" stroke="#fff" stroke-width=".8" fill="none"/>
<text x="19" y="33" font-family="Liberation Sans" font-weight="700" font-size="6" fill="#123a5c" text-anchor="middle" textLength="36" lengthAdjust="spacingAndGlyphs">SiWeCoinVen</text>
<path d="M2 34.6h34M4 36.6h30" stroke="#3da4dc" stroke-width=".35"/><circle cx="4" cy="36.6" r=".7" fill="#3da4dc"/><circle cx="19" cy="34.6" r=".7" fill="#3da4dc"/></svg>
<div class="a" style="left:1774px;top:57px;width:8px;height:14px;border:1.2px solid #5c6f5e"></div>
<svg class="a" style="left:1810px;top:55px" width="16" height="16" viewBox="0 0 16 16"><path d="M9.8 1.6A6.4 6.4 0 1 0 14.6 10.2 5.2 5.2 0 0 1 9.8 1.6z" fill="none" stroke="#5c6f5e" stroke-width="1.3" stroke-linejoin="round"/></svg>
<svg class="a" style="left:1848px;top:53px" width="20" height="18" viewBox="0 0 20 18"><path d="M10 1.2q1 0 1 1.2 4.2 1.2 4.4 6l.4 4 2.2 3H2l2.2-3 .4-4q.2-4.8 4.4-6 0-1.2 1-1.2z" fill="#f7c52a"/><path d="M6.2 4.5q-1.4 2-1.3 5" stroke="#fde38a" stroke-width="1" fill="none"/>
<path d="M2 14.4h16l-.6 1.6H2.6z" fill="#e2a418"/><ellipse cx="10" cy="15.2" rx="5.5" ry=".9" fill="#3a2a1a"/><circle cx="10" cy="15.6" r="1" fill="#f7c52a"/></svg>
<div class="a" style="left:1859px;top:42px;width:20px;height:20px;border-radius:50%;background:#e8624e;border:1.5px solid #fff"></div>
<div class="t" style="left:1865.19px;top:45.27px;font-size:11.33px;line-height:15px;font-weight:700;color:#ffffff;letter-spacing:0.000px;-webkit-text-stroke:0.20px currentColor;">2</div>
<svg class="a" style="left:973px;top:247px" width="36" height="25" viewBox="0 0 36 25"><ellipse cx="18" cy="21" rx="17" ry="3.4" fill="#dba24a" stroke="#8a5a1e" stroke-width=".6"/>
<rect x="4" y="7" width="6" height="6" fill="#6a7460" stroke="#2f2f26" stroke-width=".5"/><rect x="11" y="2.5" width="8" height="7" fill="#efe2bc" stroke="#5a4a2a" stroke-width=".5"/>
<rect x="19" y="4.5" width="6" height="6" fill="#c99a3a" stroke="#5a4a2a" stroke-width=".5"/><path d="M26 5.5l4-4" stroke="#e0602a" stroke-width="1.3"/><rect x="25" y="4" width="4" height="4" fill="#e6b23a"/>
<circle cx="29" cy="12" r="4.2" fill="#6aa83a"/><rect x="1.5" y="12" width="7" height="6" fill="#8a7a4a" stroke="#2f2f26" stroke-width=".5"/><rect x="2" y="9" width="5" height="4" fill="#4a5a6a"/>
<rect x="9" y="10" width="6" height="8" fill="#5a8a3a" stroke="#2f2f26" stroke-width=".5"/><rect x="15" y="9" width="7" height="7" fill="#7a6a3a" stroke="#2f2f26" stroke-width=".5"/>
<rect x="22" y="11" width="7" height="7" fill="#d7a84a" stroke="#5a4a2a" stroke-width=".5"/><rect x="12" y="15" width="6" height="5" fill="#98a868" stroke="#2f2f26" stroke-width=".4"/>
<circle cx="19.5" cy="18.5" r="2.2" fill="#f2c232"/><circle cx="8" cy="18.6" r="1.8" fill="#e8b030"/><rect x="27" y="15" width="5" height="4" fill="#a8c060" stroke="#2f2f26" stroke-width=".4"/></svg>
<svg class="a" style="left:1088px;top:243px" width="38" height="34" viewBox="0 0 38 34"><ellipse cx="19" cy="29" rx="17" ry="3.6" fill="#e0b46a" stroke="#8a5a2a" stroke-width=".7"/>
<rect x="11" y="3" width="16" height="21" rx="1.4" fill="#f2e2c0" stroke="#7a5a3a" stroke-width=".8"/><rect x="16" y="1.2" width="6" height="3" rx="1" fill="#a09a90"/>
<path d="M15 8h9M15 11.5h9M15 15h8" stroke="#b09070" stroke-width="1"/><path d="M13 8l1 1 1.4-1.6M13 11.5l1 1 1.4-1.6" stroke="#5aa04a" stroke-width=".7" fill="none"/>
<circle cx="8.5" cy="12" r="4" fill="#f0b020" stroke="#8a6a1a" stroke-width=".6"/><circle cx="8.5" cy="12" r="1.6" fill="#6a8a2a"/>
<rect x="5" y="17" width="2" height="8" fill="#6aa83a"/><rect x="7.5" y="15" width="2" height="10" fill="#ee8a2a"/>
<circle cx="31" cy="15" r="4" fill="#6aa83a"/><rect x="21" y="16" width="12" height="10" rx="1" fill="#efdca0" stroke="#7a5a3a" stroke-width=".7"/>
<rect x="23" y="18" width="8" height="2.4" fill="#6aa83a"/><path d="M23 22.5h8" stroke="#c08a3a" stroke-width="1.2"/>
<ellipse cx="17" cy="25" rx="3.2" ry="1.2" fill="#e8b830"/><rect x="13.8" y="21" width="6.4" height="4" fill="#f2c232"/></svg>
<svg class="a" style="left:1205px;top:241px" width="35" height="37" viewBox="0 0 35 37"><path d="M12 5l5.5-3.2 5.5 3.2" fill="#f0b628" stroke="#5a3a12" stroke-width=".8"/>
<rect x="12" y="5" width="11" height="8" fill="#f0b628" stroke="#5a3a12" stroke-width=".8"/><circle cx="17.5" cy="9" r="2.4" fill="none" stroke="#5a3a12" stroke-width=".7"/>
<rect x="5" y="12" width="25" height="6" fill="#f0b628" stroke="#5a3a12" stroke-width=".8"/><path d="M8 15h19" stroke="#5a3a12" stroke-width="1" stroke-dasharray="1.5 .8"/>
<path d="M17.5 18v3M5.5 21h24M5.5 21v2.5M17.5 21v2.5M29.5 21v2.5" stroke="#5a3a12" stroke-width=".8" fill="none"/>
<rect x="1.5" y="23" width="8" height="13" fill="#f0b628" stroke="#5a3a12" stroke-width=".8"/><rect x="1.5" y="23" width="8" height="2.6" fill="#d8463a"/>
<rect x="13.5" y="23" width="8" height="13" fill="#f0b628" stroke="#5a3a12" stroke-width=".8"/><rect x="13.5" y="23" width="8" height="2.6" fill="#d8463a"/>
<rect x="25.5" y="23" width="8" height="13" fill="#f0b628" stroke="#5a3a12" stroke-width=".8"/><rect x="25.5" y="23" width="8" height="2.6" fill="#d8463a"/>
<circle cx="5.5" cy="29" r="1.6" fill="none" stroke="#5a3a12" stroke-width=".6"/><circle cx="17.5" cy="29" r="1.6" fill="none" stroke="#5a3a12" stroke-width=".6"/><circle cx="29.5" cy="29" r="1.6" fill="none" stroke="#5a3a12" stroke-width=".6"/></svg>
</body></html>
